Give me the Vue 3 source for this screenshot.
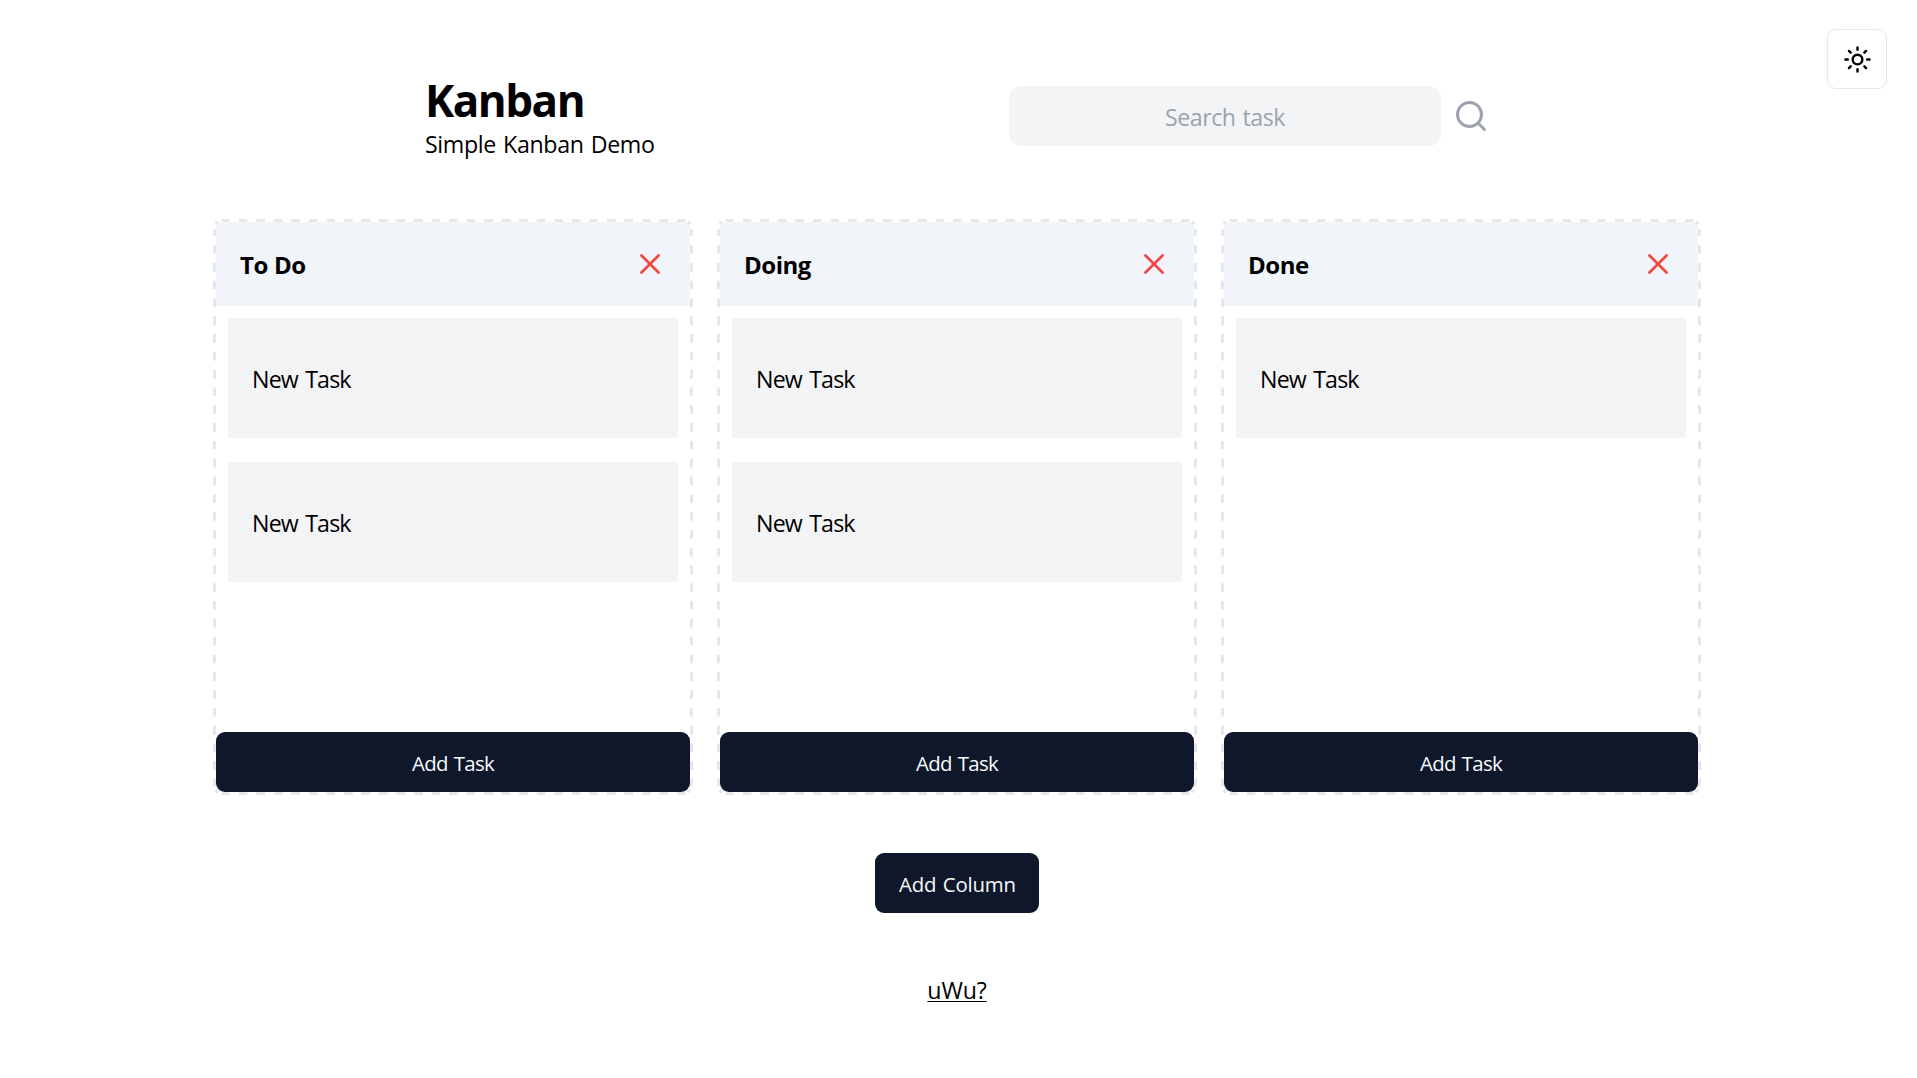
<script setup>
import { ref } from 'vue'

const columns = ref([
  { title: 'To Do', tasks: ['New Task', 'New Task'] },
  { title: 'Doing', tasks: ['New Task', 'New Task'] },
  { title: 'Done', tasks: ['New Task'] },
])
const query = ref('')
</script>

<template>
  <div class="page">
    <button class="theme" aria-label="Toggle theme">
      <svg width="29" height="29" viewBox="0 0 24 24" fill="none" stroke="currentColor" stroke-width="2" stroke-linecap="round" stroke-linejoin="round">
        <circle cx="12" cy="12" r="4" />
        <path d="M12 2v2M12 20v2M4.93 4.93l1.41 1.41M17.66 17.66l1.41 1.41M2 12h2M20 12h2M6.34 17.66l-1.41 1.41M19.07 4.93l-1.41 1.41" />
      </svg>
    </button>

    <header class="top">
      <div class="brand">
        <h1>Kanban</h1>
        <p>Simple Kanban Demo</p>
      </div>
      <div class="search">
        <input v-model="query" type="text" placeholder="Search task" />
        <svg width="36" height="36" viewBox="0 0 24 24" fill="none" stroke="currentColor" stroke-width="2">
          <circle cx="11" cy="11" r="8" />
          <path d="M21 21l-4.35-4.35" stroke-linecap="round" />
        </svg>
      </div>
    </header>

    <main class="board">
      <section v-for="column in columns" :key="column.title" class="column">
        <!-- dashed outline with wide gaps -->
        <svg class="outline" width="480" height="576" viewBox="0 0 480 576" fill="none" stroke="#e5e7eb" stroke-width="3">
          <path d="M9 1.5H472M9 574.5H472" stroke-dasharray="8.7 8.83" stroke-dashoffset="0.8" />
          <path d="M1.5 10V567M478.5 10V567" stroke-dasharray="8.7 9.1" stroke-dashoffset="1.7" />
          <path d="M2.7 5.1L5.1 2.7M474.9 2.7L477.3 5.1M2.7 570.9L5.1 573.3M474.9 573.3L477.3 570.9" />
        </svg>
        <div class="head">
          <h2>{{ column.title }}</h2>
          <svg width="36" height="36" viewBox="0 0 24 24" fill="none" stroke="currentColor" stroke-width="1.8" stroke-linecap="round">
            <path d="M6.3 17.7L17.7 6.3M6.3 6.3l11.4 11.4" />
          </svg>
        </div>
        <div class="tasks">
          <div v-for="(task, i) in column.tasks" :key="i" class="task">{{ task }}</div>
        </div>
        <button class="primary add-task">Add Task</button>
      </section>
    </main>

    <button class="primary add-column">Add Column</button>
    <a class="more">uWu?</a>
  </div>
</template>

<style>
body {
  margin: 0;
  background: #fff;
}
</style>

<style scoped>
.page {
  position: relative;
  box-sizing: border-box;
  height: 1078px;
  padding: 72px 3px 0 0;
  display: flex;
  flex-direction: column;
  align-items: center;
  overflow: hidden;
  color: #000;
  font-family: "Open Sans", "Noto Sans", sans-serif;
  font-size: 23.2px;
  line-height: 36px;
  letter-spacing: -0.36px;
  word-spacing: 1.5px;
}
h1, h2, p { margin: 0; }
button, input { font: inherit; letter-spacing: inherit; word-spacing: inherit; border: 0; }
svg { display: block; flex: none; }

.theme {
  position: absolute;
  top: 29px;
  right: 30px;
  box-sizing: border-box;
  width: 60px;
  height: 60px;
  padding: 0;
  display: flex;
  align-items: center;
  justify-content: center;
  color: #000;
  background: #fff;
  border: 1px solid #e2e8f0;
  border-radius: 9px;
}

.top {
  width: 1064px;
  height: 147px;
  display: flex;
  justify-content: space-between;
}
.brand { padding-top: 3px; }
h1 {
  padding-bottom: 1px;
  font-size: 44px;
  line-height: 50px;
  font-weight: 700;
  letter-spacing: -1.5px;
}
.search {
  height: 60px;
  padding-top: 14px;
  display: flex;
  align-items: center;
  gap: 12px;
  color: #9ca3af;
}
input {
  box-sizing: border-box;
  width: 432px;
  height: 60px;
  padding: 2px 12px 0;
  text-align: center;
  letter-spacing: -0.5px;
  background: #f3f4f6;
  border-radius: 12px;
  outline: none;
}
input::placeholder { color: #9ca3af; opacity: 1; }

.board {
  display: flex;
  gap: 24px;
}
.column {
  position: relative;
  box-sizing: border-box;
  width: 480px;
  height: 576px;
  padding: 3px;
  display: flex;
  flex-direction: column;
}
.outline {
  position: absolute;
  inset: 0;
  pointer-events: none;
}
.head {
  box-sizing: border-box;
  height: 84px;
  padding: 0 22.3px 0 24px;
  display: flex;
  align-items: center;
  justify-content: space-between;
  background: #f1f5f9;
  border-radius: 6px 6px 0 0;
  color: #ef4444;
}
h2 {
  padding-top: 2px;
  font-size: 24px;
  line-height: 36px;
  font-weight: 700;
  letter-spacing: -0.5px;
  word-spacing: 0.5px;
  color: #000;
}
.tasks {
  flex: 1;
  padding: 12px;
  display: flex;
  flex-direction: column;
  gap: 24px;
}
.task {
  box-sizing: border-box;
  height: 120px;
  padding: 43px 24px 0;
  letter-spacing: -0.83px;
  word-spacing: 2px;
  background: #f3f4f6;
}
.primary {
  height: 60px;
  padding: 2px 24px 0;
  font-size: 20.4px;
  color: #f8fafc;
  background: #0f172a;
  border-radius: 9px;
}
.add-task {
  position: relative;
  letter-spacing: -0.7px;
}
.add-column {
  width: 164px;
  margin-top: 58px;
  letter-spacing: -0.2px;
  white-space: nowrap;
}
.more {
  margin-top: 59px;
  letter-spacing: -0.15px;
  text-decoration: underline;
  text-decoration-thickness: 1px;
  text-underline-offset: 2px;
}
</style>
